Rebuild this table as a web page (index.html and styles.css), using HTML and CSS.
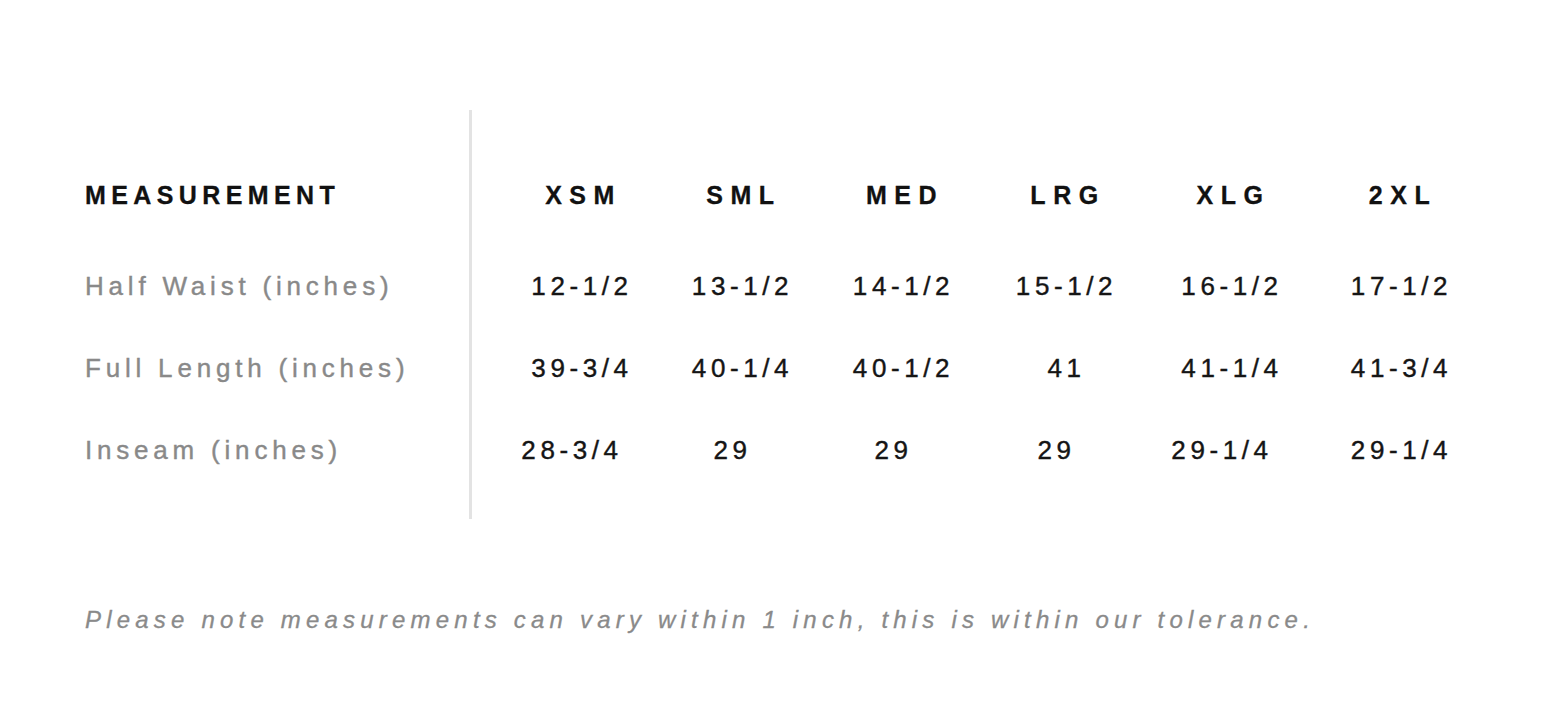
FILE: index.html
```html
<!DOCTYPE html>
<html lang="en">
<head>
<meta charset="utf-8">
<title>Size Chart</title>
<link rel="stylesheet" href="styles.css">
</head>
<body>
<main class="chart">
  <section class="table">
    <div class="labels">
      <div class="cell head-main">MEASUREMENT</div>
      <div class="cell label">Half Waist (inches)</div>
      <div class="cell label">Full Length (inches)</div>
      <div class="cell label">Inseam (inches)</div>
    </div>
    <div class="sizes">
      <div class="cell head">XSM</div>
      <div class="cell head">SML</div>
      <div class="cell head">MED</div>
      <div class="cell head">LRG</div>
      <div class="cell head">XLG</div>
      <div class="cell head">2XL</div>

      <div class="cell val">12-1/2</div>
      <div class="cell val">13-1/2</div>
      <div class="cell val">14-1/2</div>
      <div class="cell val">15-1/2</div>
      <div class="cell val">16-1/2</div>
      <div class="cell val">17-1/2</div>

      <div class="cell val">39-3/4</div>
      <div class="cell val">40-1/4</div>
      <div class="cell val">40-1/2</div>
      <div class="cell val">41</div>
      <div class="cell val">41-1/4</div>
      <div class="cell val">41-3/4</div>

      <div class="cell val offset">28-3/4</div>
      <div class="cell val offset">29</div>
      <div class="cell val offset">29</div>
      <div class="cell val offset">29</div>
      <div class="cell val offset">29-1/4</div>
      <div class="cell val">29-1/4</div>
    </div>
  </section>
  <p class="note">Please note measurements can vary within 1 inch, this is within our tolerance.</p>
</main>
</body>
</html>
```
FILE: styles.css
```css
html, body {
  margin: 0;
  padding: 0;
  background: #ffffff;
}

body {
  font-family: "Liberation Sans", Arial, Helvetica, sans-serif;
  color: #111111;
}

.chart {
  padding: 110px 0 0 85px;
}

.table {
  display: flex;
  align-items: stretch;
}

.labels {
  width: 384px;
  padding: 45px 0 28px 0;
  display: grid;
  grid-template-rows: 90px repeat(3, 82px);
  align-content: start;
}

.sizes {
  border-left: 3px solid #e3e3e3;
  padding: 45px 0 28px 27px;
  display: grid;
  grid-template-columns: 161px 160px 162px 164px 167px 172px;
  grid-template-rows: 90px repeat(3, 82px);
}

.cell {
  display: flex;
  align-items: center;
  white-space: nowrap;
}

.labels .cell {
  justify-content: flex-start;
}

.sizes .cell {
  justify-content: center;
}

.head-main,
.head {
  font-weight: 700;
  font-size: 25px;
  color: #111111;
  padding-bottom: 10px;
  -webkit-text-stroke: 0.3px #111111;
}

.head-main {
  letter-spacing: 5.4px;
}

.head {
  letter-spacing: 7.5px;
  padding-left: 8px;
}

.label {
  font-size: 26px;
  letter-spacing: 4.8px;
  color: #898989;
  -webkit-text-stroke: 0.4px #898989;
}

.val {
  font-size: 26px;
  letter-spacing: 4.6px;
  color: #151515;
  padding-left: 5px;
  -webkit-text-stroke: 0.4px #151515;
}

.val.offset {
  padding-right: 20px;
}

.note {
  margin: 86px 0 0 0;
  font-size: 24px;
  line-height: 30px;
  font-style: italic;
  letter-spacing: 5.2px;
  color: #8a8a8a;
  -webkit-text-stroke: 0.3px #8a8a8a;
}
```
